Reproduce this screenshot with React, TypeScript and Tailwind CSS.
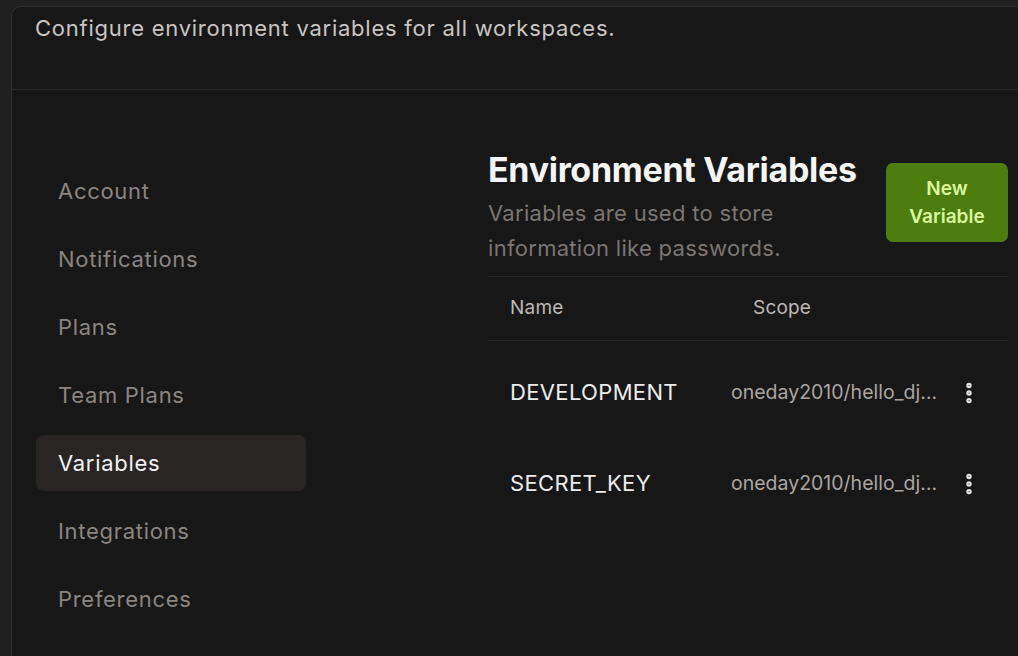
import { EllipsisVertical } from 'lucide-react'

const navItems = [
  "Account",
  "Notifications",
  "Plans",
  "Team Plans",
  "Variables",
  "Integrations",
  "Preferences",
]

const variables = [
  { name: "DEVELOPMENT", scope: "oneday2010/hello_django" },
  { name: "SECRET_KEY", scope: "oneday2010/hello_django" },
]

const App = () => {
  return (
    <div className="w-[1018px] h-[656px] overflow-hidden bg-[#202020] pl-[11px] pt-[6px] font-['Inter',sans-serif]">
      <div className="h-full flex flex-col bg-[#171717] border-l border-t border-[#2e2e2e] rounded-tl-[10px]">
        <div className="h-[83px] shrink-0 border-b border-[#2a2a2a] px-[23px] pt-[7px]">
          <p className="text-[22px] leading-[28px] tracking-[0.75px] text-[#c9c5c1]">
            Configure environment variables for all workspaces.
          </p>
        </div>

        <div className="flex flex-1">
          <nav className="w-[295px] shrink-0 pl-[24px] pt-[73px] flex flex-col gap-[12px]">
            {navItems.map((item) => (
              <div
                key={item}
                className={
                  item === "Variables"
                    ? "h-[56px] w-[270px] rounded-[8px] bg-[#2a2525] px-[22px] flex items-center text-[22px] tracking-[0.7px] text-[#f2f2f2]"
                    : "h-[56px] w-[270px] rounded-[8px] px-[22px] flex items-center text-[22px] tracking-[0.7px] text-[#8a8581]"
                }
              >
                {item}
              </div>
            ))}
          </nav>

          <main className="ml-[181px] w-[520px] pt-[60px]">
            <div className="flex items-start justify-between border-b border-[#2c2727] pb-[10px]">
              <div>
                <h1 className="text-[34px] leading-[40px] font-bold tracking-[-0.3px] text-[#f5f5f5]">
                  Environment Variables
                </h1>
                <p className="mt-[6px] text-[22px] leading-[35px] tracking-[0.3px] text-[#7a7572]">
                  Variables are used to store
                  <br />
                  information like passwords.
                </p>
              </div>
              <button className="mt-[13px] w-[122px] h-[79px] rounded-[7px] bg-[#4d7c0f] text-[19px] leading-[28px] font-semibold text-[#d9f99d]">
                New
                <br />
                Variable
              </button>
            </div>

            <div className="h-[64px] flex items-center border-b border-[#2c2727] pl-[22px] text-[19px] tracking-[0.2px] text-[#bdb8b4]">
              <span className="w-[243px]">Name</span>
              <span>Scope</span>
            </div>

            <div className="pt-[6px]">
              {variables.map((v) => (
                <div key={v.name} className="h-[91px] flex items-center pl-[22px]">
                  <span className="w-[221px] text-[22px] tracking-[0.35px] text-[#ececec]">{v.name}</span>
                  <span className="w-[212px] truncate text-[19.5px] text-[#aaa5a1]">{v.scope}</span>
                  <EllipsisVertical size={26} strokeWidth={3} className="ml-[13px] text-[#e0e0e0]" />
                </div>
              ))}
            </div>
          </main>
        </div>
      </div>
    </div>
  )
}

export default App
